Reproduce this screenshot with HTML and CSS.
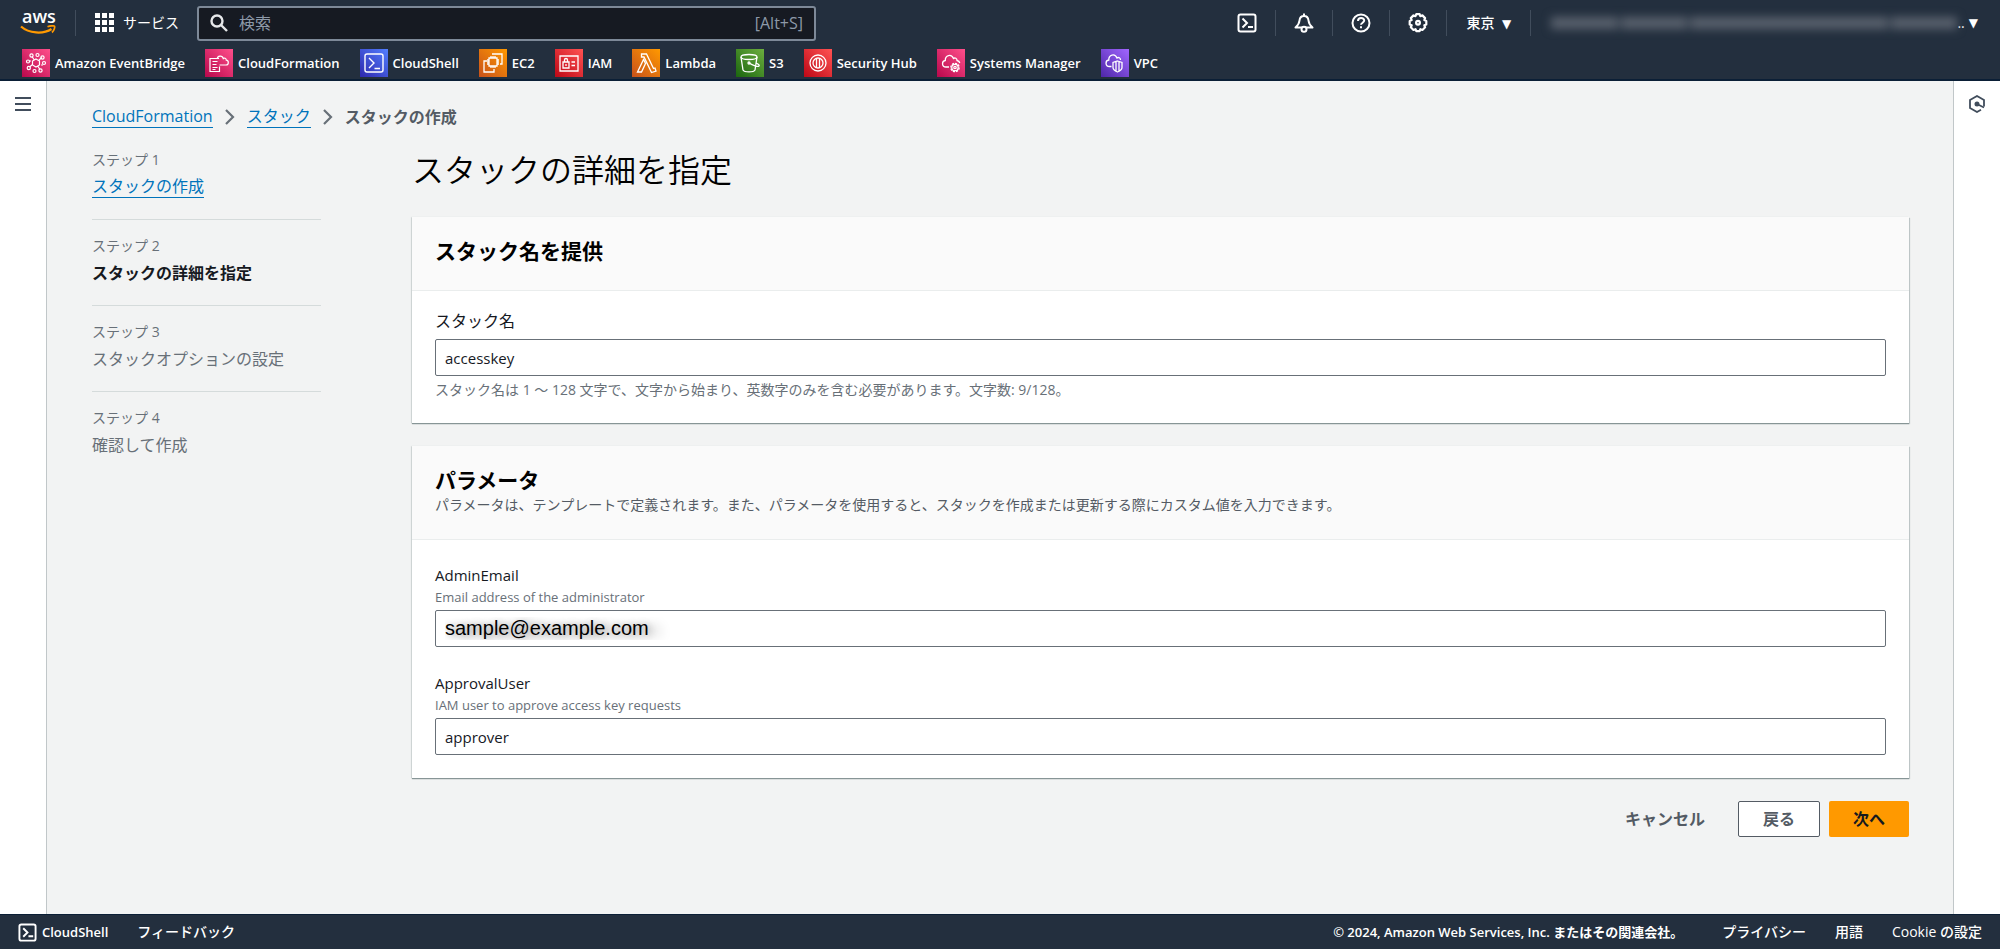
FILE: index.html
```html
<!DOCTYPE html>
<html lang="ja">
<head>
<meta charset="utf-8">
<title>スタックの作成 - CloudFormation</title>
<link rel="stylesheet" href="styles.css">
</head>
<body>
<svg class="defs" aria-hidden="true">
  <defs>
    <linearGradient id="g-pink" x1="0" y1="1" x2="1" y2="0"><stop offset="0" stop-color="#b8084c"/><stop offset="1" stop-color="#ff4f8b"/></linearGradient>
    <linearGradient id="g-blue" x1="0" y1="1" x2="1" y2="0"><stop offset="0" stop-color="#2e27ad"/><stop offset="1" stop-color="#527fff"/></linearGradient>
    <linearGradient id="g-orange" x1="0" y1="1" x2="1" y2="0"><stop offset="0" stop-color="#c8511b"/><stop offset="1" stop-color="#ff9900"/></linearGradient>
    <linearGradient id="g-red" x1="0" y1="1" x2="1" y2="0"><stop offset="0" stop-color="#bd0816"/><stop offset="1" stop-color="#ff5252"/></linearGradient>
    <linearGradient id="g-green" x1="0" y1="1" x2="1" y2="0"><stop offset="0" stop-color="#1b660f"/><stop offset="1" stop-color="#6cae3e"/></linearGradient>
    <linearGradient id="g-purple" x1="0" y1="1" x2="1" y2="0"><stop offset="0" stop-color="#4d27a8"/><stop offset="1" stop-color="#a166ff"/></linearGradient>
  </defs>
</svg>

<header class="topnav">
  <div class="nav-main">
    <a class="logo" href="#" aria-label="AWS">
      <span class="logo-word">aws</span>
      <svg class="logo-smile" viewBox="0 0 36 10"><path d="M1 1.500C9 8.500 23 9.500 31.500 4" fill="none" stroke="#f90" stroke-width="2.300"/><path d="M27.500 1.800c3-1.300 6.500-1.200 7-.5.5.8-.3 4.200-2.500 6.200" fill="none" stroke="#f90" stroke-width="1.700"/></svg>
    </a>
    <button class="services" type="button">
      <svg class="grid-icon" viewBox="0 0 20 20" fill="#fff"><path d="M0 0h5v5H0zM7 0h5v5H7zM14 0h5v5h-5zM0 7h5v5H0zM7 7h5v5H7zM14 7h5v5h-5zM0 14h5v5H0zM7 14h5v5H7zM14 14h5v5h-5z"/></svg>
      <span>サービス</span>
    </button>
    <label class="search">
      <svg class="search-icon" viewBox="0 0 18 18" fill="none" stroke="#e6e8ea" stroke-width="2.400"><circle cx="7" cy="7" r="5.500"/><path d="M11 11l6 6"/></svg>
      <input type="search" placeholder="検索" aria-label="検索">
      <span class="shortcut">[Alt+S]</span>
    </label>
    <div class="nav-tools">
      <button class="tool" type="button" aria-label="CloudShell"><svg class="tool-icon" viewBox="0 0 20 20" fill="none" stroke="#fff" stroke-width="2"><rect x="1.500" y="1.500" width="17" height="17" rx="2"/><path d="M5.500 5.500l4.500 4.500-4.500 4.500M11 14h5"/></svg></button>
      <button class="tool" type="button" aria-label="通知"><svg class="tool-icon" viewBox="0 0 20 20" fill="none" stroke="#fff" stroke-width="2" stroke-linejoin="round"><path d="M10 0.500v2M1.500 14.500c3-2.500 3.700-4 4-7C5.800 4.500 7.700 3 10 3s4.200 1.500 4.500 4.500c.3 3 1 4.500 4 7z"/><circle cx="10" cy="16.300" r="2.500" fill="#232f3e"/></svg></button>
      <button class="tool" type="button" aria-label="ヘルプ"><svg class="tool-icon" viewBox="0 0 20 20" fill="none" stroke="#fff" stroke-width="2"><circle cx="10" cy="10" r="8.500"/><path d="M7 8c0-4 6.200-3.800 6.200-.4 0 2-3.200 2.200-3.200 4.200M10 13.300v2"/></svg></button>
      <button class="tool" type="button" aria-label="設定"><svg class="tool-icon" viewBox="0 0 20 20" fill="none" stroke="#fff" stroke-width="2.200" stroke-linejoin="round"><path d="M8.300 1.200h3.400l.6 2 2.100-.8 2.700 2.700-.8 2 2 .8v3.600l-2 .8.8 2-2.700 2.700-2-.8-.8 2H8.300l-.8-2-2 .8-2.700-2.700.9-2-2-.8V7.900l2-.8-.9-2 2.700-2.700 2 .8z"/><circle cx="10" cy="9.700" r="1.900"/></svg></button>
      <button class="region" type="button">東京 <span class="caret">▼</span></button>
      <button class="account" type="button" aria-label="アカウント"><span class="masked"><i></i><i></i><i></i><i></i></span><span>..</span><span class="caret">▼</span></button>
    </div>
  </div>
  <nav class="favorites">
    <a href="#"><svg viewBox="0 0 28 28" fill="none" stroke="#fff" stroke-width="1.200"><path fill="url(#g-pink)" stroke="none" d="M0 0h28v28H0z"/><path d="M14 10l3.500 2v4L14 18l-3.500-2v-4zM12 10.500L10 7.500M17 11l3-2.500M10.500 15.500L7.500 18M16 17.500l2 3M9 12H7M19 16h2"/><circle cx="9.500" cy="6.500" r="1.600"/><circle cx="15.500" cy="6" r="1.500"/><circle cx="20.500" cy="8.500" r="1.600"/><circle cx="22" cy="14" r="1.500"/><circle cx="18.500" cy="21.500" r="1.600"/><circle cx="12.500" cy="22" r="1.500"/><circle cx="6.800" cy="19" r="1.600"/><circle cx="6" cy="12.500" r="1.500"/></svg>Amazon EventBridge</a>
    <a href="#"><svg viewBox="0 0 28 28" fill="none" stroke="#fff" stroke-width="1.200"><path fill="url(#g-pink)" stroke="none" d="M0 0h28v28H0z"/><path d="M14 9.500H5v13h9.500v-5M7.500 12.500h5M7.500 15.500h4M7.500 18.500h5M7.500 20.500h3M14.500 16H21c3 0 3-4.500.3-4.800 0-2-2-2.700-3-1.700-1-3.500-6-3-6 .5"/></svg>CloudFormation</a>
    <a href="#"><svg viewBox="0 0 28 28" fill="none" stroke="#fff" stroke-width="1.400"><path fill="url(#g-blue)" stroke="none" d="M0 0h28v28H0z"/><rect x="5" y="5" width="18" height="18" rx="2"/><path d="M9 9l5 5-5 5M14.500 19.500H20"/></svg>CloudShell</a>
    <a href="#"><svg viewBox="0 0 28 28" fill="none" stroke="#fff" stroke-width="1.300"><path fill="url(#g-orange)" stroke="none" d="M0 0h28v28H0z"/><path d="M10 9h8v8h-8zM12 9V7M14 9V7M16 9V7M12 19v-2M14 19v-2M16 19v-2M10 11H8M10 13H8M10 15H8M20 11h-2M20 13h-2M20 15h-2M13 5h10v10h-2M8 12H5v11h10v-3"/></svg>EC2</a>
    <a href="#"><svg viewBox="0 0 28 28" fill="none" stroke="#fff" stroke-width="1.300"><path fill="url(#g-red)" stroke="none" d="M0 0h28v28H0z"/><path d="M5 7h18v15H5zM8 13h6v6H8zM9.500 13v-2c0-2 3-2 3 0v2M11 15v2M16.500 13H20M16.500 16.500H20"/></svg>IAM</a>
    <a href="#"><svg viewBox="0 0 28 28" fill="none" stroke="#fff" stroke-width="1.300"><path fill="url(#g-orange)" stroke="none" d="M0 0h28v28H0z"/><path d="M5.500 23l6-12.500 2 4L9.500 23zM9.500 5h5l7 14.500 1.500-.5 1 3-4.500 1.500-7.500-15.500H9.500z"/></svg>Lambda</a>
    <a href="#"><svg viewBox="0 0 28 28" fill="none" stroke="#fff" stroke-width="1.300"><path fill="url(#g-green)" stroke="none" d="M0 0h28v28H0z"/><ellipse cx="13" cy="8" rx="8" ry="2.500"/><path d="M5 8l2 13c1.500 2.500 10.500 2.500 12 0l2-13M13 14c4 2.500 9 4 10 3 .8-.8-1-2-3-3"/><circle cx="13" cy="14" r="1"/></svg>S3</a>
    <a href="#"><svg viewBox="0 0 28 28" fill="none" stroke="#fff" stroke-width="1.300"><path fill="url(#g-red)" stroke="none" d="M0 0h28v28H0z"/><circle cx="14" cy="14" r="8"/><circle cx="14" cy="14" r="5"/><path d="M12.500 9v10M15.500 9v10"/></svg>Security Hub</a>
    <a href="#"><svg viewBox="0 0 28 28" fill="none" stroke="#fff" stroke-width="1.300"><path fill="url(#g-pink)" stroke="none" d="M0 0h28v28H0z"/><path d="M12 18H9c-4.500 0-4.500-6-.7-6.500C8 6 14.500 4.500 16.500 9.500c1.500-1.200 3.700 0 3.500 2 1.500.3 2.500 1.200 2.800 2.500"/><circle cx="18" cy="18.500" r="4.200" stroke-dasharray="2.200 1"/><circle cx="18" cy="18.500" r="3.200"/><circle cx="18" cy="18.500" r="1.200"/></svg>Systems Manager</a>
    <a href="#"><svg viewBox="0 0 28 28" fill="none" stroke="#fff" stroke-width="1.300"><path fill="url(#g-purple)" stroke="none" d="M0 0h28v28H0z"/><path d="M10.500 17.500H8.500c-4.500 0-4.500-6-.7-6.500C7.500 5.500 14 4 16 9c1.500-1.200 3.700 0 3.500 2M16.500 12l4.500 1.500v5c0 2-2 3.500-4.500 4.500-2.500-1-4.500-2.500-4.500-4.500v-5zM15 13v9M18 13v9"/></svg>VPC</a>
  </nav>
</header>

<div class="shell">
  <aside class="rail rail-left">
    <button type="button" aria-label="ナビゲーションを開く"><svg class="rail-icon" viewBox="0 0 16 16" stroke="#414d5c" stroke-width="2"><path d="M0 2h16M0 8h16M0 14h16"/></svg></button>
  </aside>
  <main class="page">
    <nav class="breadcrumbs" aria-label="パンくずリスト">
      <a class="link" href="#">CloudFormation</a>
      <svg class="chevron" viewBox="0 0 10 16" fill="none" stroke="#687078" stroke-width="2.200"><path d="M1 1l7 7-7 7"/></svg>
      <a class="link" href="#">スタック</a>
      <svg class="chevron" viewBox="0 0 10 16" fill="none" stroke="#687078" stroke-width="2.200"><path d="M1 1l7 7-7 7"/></svg>
      <span class="current">スタックの作成</span>
    </nav>
    <div class="wizard">
      <ol class="steps">
        <li><span class="step-no">ステップ 1</span><a class="step-title link" href="#">スタックの作成</a></li>
        <li class="active"><span class="step-no">ステップ 2</span><span class="step-title">スタックの詳細を指定</span></li>
        <li><span class="step-no">ステップ 3</span><span class="step-title">スタックオプションの設定</span></li>
        <li><span class="step-no">ステップ 4</span><span class="step-title">確認して作成</span></li>
      </ol>
      <form class="content">
        <h1>スタックの詳細を指定</h1>
        <section class="card">
          <header><h2>スタック名を提供</h2></header>
          <div class="card-body">
            <div class="field">
              <label for="stack-name">スタック名</label>
              <input id="stack-name" type="text" value="accesskey">
              <p class="constraint">スタック名は 1 ～ 128 文字で、文字から始まり、英数字のみを含む必要があります。文字数: 9/128。</p>
            </div>
          </div>
        </section>
        <section class="card">
          <header><h2>パラメータ</h2><p>パラメータは、テンプレートで定義されます。また、パラメータを使用すると、スタックを作成または更新する際にカスタム値を入力できます。</p></header>
          <div class="card-body parameters">
            <div class="field">
              <label for="admin-email">AdminEmail</label>
              <p class="hint">Email address of the administrator</p>
              <input id="admin-email" class="email" type="text" value="sample@example.com">
            </div>
            <div class="field">
              <label for="approval-user">ApprovalUser</label>
              <p class="hint">IAM user to approve access key requests</p>
              <input id="approval-user" type="text" value="approver">
            </div>
          </div>
        </section>
        <div class="actions">
          <button class="btn btn-link" type="button">キャンセル</button>
          <button class="btn btn-normal" type="button">戻る</button>
          <button class="btn btn-primary" type="button">次へ</button>
        </div>
      </form>
    </div>
  </main>
  <aside class="rail rail-right">
    <button type="button" aria-label="情報"><svg class="rail-icon rail-hex" viewBox="0 0 18 18" fill="none" stroke="#414d5c" stroke-width="1.800"><path d="M16 11.500V5L9 1 2 5v8l7 4 4-2.300"/><circle cx="9" cy="9" r="1.600" fill="#414d5c"/><path d="M9 9l7 3.500"/></svg></button>
  </aside>
</div>

<footer class="footer">
  <button class="shell-btn" type="button"><svg class="foot-icon" viewBox="0 0 20 20" fill="none" stroke="#fff" stroke-width="2"><rect x="1.500" y="1.500" width="17" height="17" rx="2"/><path d="M5.500 5.500l4.500 4.500-4.500 4.500M11 14h5"/></svg>CloudShell</button>
  <a href="#">フィードバック</a>
  <span class="copyright">© 2024, Amazon Web Services, Inc. またはその関連会社。</span>
  <a href="#">プライバシー</a>
  <a href="#">用語</a>
  <a href="#">Cookie の設定</a>
</footer>
</body>
</html>
```

FILE: styles.css
```css
* { box-sizing: border-box; }

body {
  margin: 0;
  min-height: 100vh;
  display: flex;
  flex-direction: column;
  background: #f2f3f3;
  color: #16191f;
  font: 16px/24px "Open Sans", "Noto Sans CJK JP", sans-serif;
}

h1, h2, p, ol { margin: 0; padding: 0; }
button { font: inherit; color: inherit; background: none; border: 0; padding: 0; cursor: pointer; }
a { color: inherit; text-decoration: none; }
svg { display: block; flex: none; }
.defs { position: absolute; width: 0; height: 0; }

/* Top navigation */
.topnav {
  background: #232f3e;
  border-bottom: 2px solid #0b1f36;
  color: #fff;
}

.nav-main {
  display: flex;
  align-items: center;
  height: 46px;
  padding-right: 22px;
}

.logo {
  width: 76px;
  height: 26px;
  padding-left: 20px;
  border-right: 1px solid #414d5c;
}
.logo-word {
  display: block;
  height: 15px;
  padding-left: 2px;
  font: 600 18px/12px "Open Sans", sans-serif;
}
.logo-smile { width: 36px; height: 10px; }

.services {
  display: flex;
  align-items: center;
  gap: 8px;
  margin-left: 19px;
  font-size: 14px;
}
.grid-icon { width: 20px; height: 20px; }

.search {
  display: flex;
  align-items: center;
  width: 619px;
  height: 35px;
  margin-left: 18px;
  padding: 0 11px;
  background: #161a22;
  border: 2px solid #7d8998;
  border-radius: 3px;
  color: #8d99a8;
}
.search-icon { width: 18px; height: 18px; }
.search input {
  flex: 1;
  min-width: 0;
  padding: 0 11px;
  background: none;
  border: 0;
  outline: 0;
  color: #fff;
  font: inherit;
}
.search input::placeholder { color: #8d99a8; opacity: 1; }
.shortcut { font-size: 16px; }

.nav-tools {
  display: flex;
  align-items: center;
  margin-left: auto;
  font-size: 14px;
}
.nav-tools button { height: 26px; border-right: 1px solid #414d5c; }
.tool { display: flex; align-items: center; justify-content: center; width: 57px; }
.tool-icon { width: 20px; height: 20px; }
.region { width: 84px; font-weight: 500; }
.caret { font: 12px/12px "DejaVu Sans", sans-serif; padding-left: 4px; }
.nav-tools .account { display: flex; align-items: center; padding-left: 20px; border: 0; }
.masked {
  display: flex;
  gap: 3px;
  width: 406px;
  height: 12px;
  filter: blur(5px);
}
.masked i { flex: 1; background: #59616d; }
.masked i:nth-child(3) { flex: 3; }

.favorites {
  display: flex;
  align-items: center;
  gap: 20px;
  height: 33px;
  padding: 0 22px;
  font-size: 13px;
  font-weight: 600;
}
.favorites a { display: flex; align-items: center; gap: 5px; white-space: nowrap; }
.favorites svg { width: 28px; height: 28px; }

/* Shell */
.shell { flex: 1; display: flex; }
.rail { width: 47px; background: #fff; }
.rail-left { border-right: 1px solid #c1c7c9; }
.rail-right { border-left: 1px solid #c1c7c9; }
.rail button { display: flex; width: 100%; justify-content: center; padding-top: 14px; }
.rail-icon { width: 16px; height: 18px; }
.rail-hex { width: 18px; }

.page { flex: 1; min-width: 0; padding: 24px 44px 0 45px; }

.link { color: #0073bb; border-bottom: 1px solid #0073bb; }

.breadcrumbs { display: flex; align-items: center; gap: 12px; }
.breadcrumbs .link { line-height: 21px; }
.chevron { width: 10px; height: 16px; }
.current { color: #545b64; font-weight: 700; }

.wizard { display: flex; gap: 91px; padding-top: 19px; }

.steps { width: 229px; list-style: none; color: #687078; }
.steps li { padding-bottom: 20px; margin-bottom: 14px; border-bottom: 1px solid #d5dbdb; }
.steps li:last-child { border: 0; }
.step-no { display: block; font-size: 14px; }
.step-title { display: block; width: fit-content; margin-top: 3px; }
.step-title.link { line-height: 22px; margin-bottom: 1px; }
.steps .active .step-title { color: #16191f; font-weight: 700; }

.content { flex: 1; min-width: 0; }
h1 { padding-bottom: 25px; font-size: 32px; line-height: 44px; font-weight: 350; color: #000; }

.card {
  margin-bottom: 23px;
  background: #fff;
  box-shadow: 0 1px 1px #879596, 1px 1px 1px #c8cfd0, -1px 0 1px #dde1e1;
}
.card > header {
  padding: 20px 23px 18px;
  background: #fafafa;
  border-bottom: 1px solid #eaeded;
  color: #545b64;
}
.card > header h2 { padding-bottom: 7px; color: #000; font-size: 21px; line-height: 28px; font-weight: 700; }
.card > header p { margin-top: -7px; padding-bottom: 5px; font-size: 14px; line-height: 22px; }
.card-body { display: grid; gap: 24px; padding: 18px 23px 23px; }
.card-body.parameters { padding-top: 23px; }

.field { display: grid; font-size: 14px; line-height: 20px; color: #687078; }
.field label { padding-bottom: 6px; color: #16191f; font-size: 16px; line-height: 24px; }
.parameters label { padding-bottom: 1px; font-size: 15px; }
.field input {
  width: 100%;
  height: 37px;
  padding: 0 9px;
  background: #fff;
  border: 1px solid #687078;
  border-radius: 2px;
  color: #16191f;
  font: inherit;
  font-size: 15px;
}
.field input.email {
  color: #000;
  font: 20px "Liberation Sans", Arial, sans-serif;
  text-shadow: 2px 1px 7px #999, 12px 2px 12px #bbb;
}
.constraint { padding-top: 4px; }
.hint { padding-bottom: 4px; font-size: 13px; line-height: 18px; }

.actions { display: flex; justify-content: flex-end; gap: 9px; }
.btn { height: 36px; padding: 0 24px; border-radius: 2px; font-weight: 700; white-space: nowrap; }
.btn-link { color: #545b64; }
.btn-normal { background: #fff; border: 1px solid #545b64; color: #545b64; }
.btn-primary { background: #f90; color: #16191f; }

/* Footer */
.footer {
  display: flex;
  align-items: center;
  gap: 29px;
  height: 35px;
  padding: 0 18px;
  background: #232f3e;
  border-top: 1px solid #0b1f36;
  color: #fff;
  font-size: 14px;
  font-weight: 500;
}
.shell-btn { display: flex; align-items: center; gap: 5px; font-size: 13px; font-weight: 600; }
.foot-icon { width: 19px; height: 19px; }
.copyright { margin-left: auto; margin-right: 10px; font-size: 13px; font-weight: 600; }
```
